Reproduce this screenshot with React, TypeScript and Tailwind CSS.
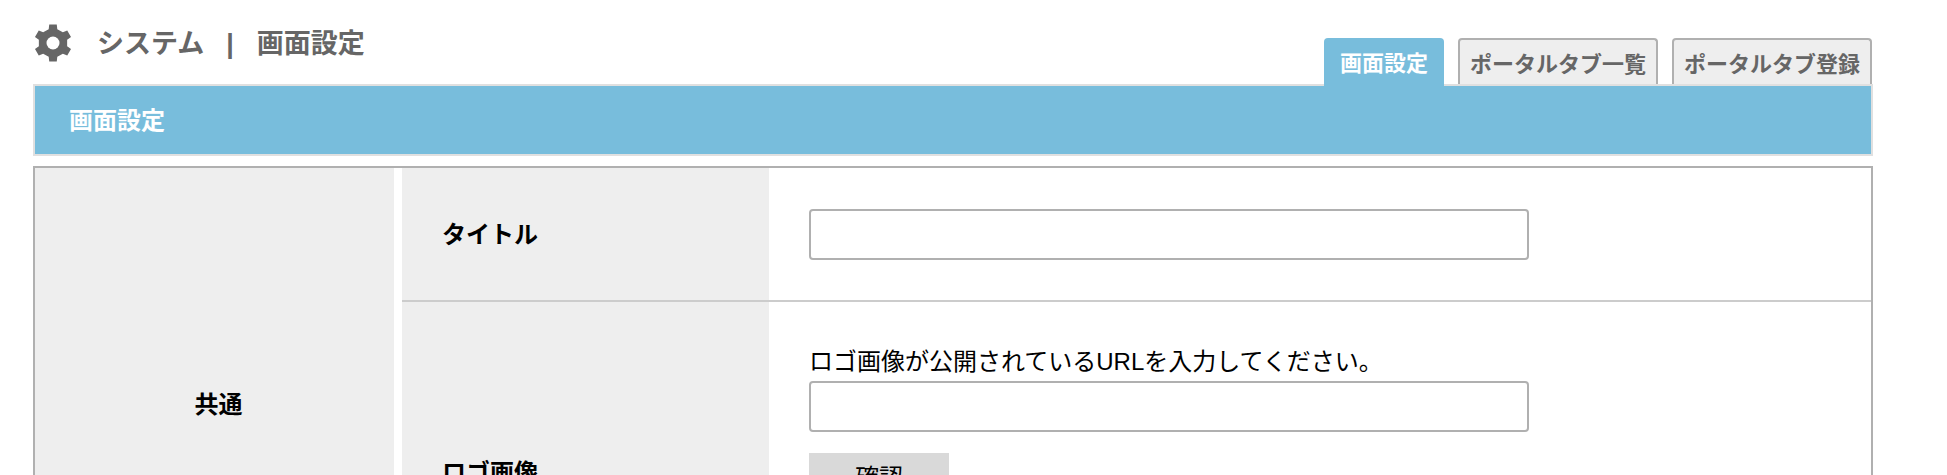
const font = { fontFamily: '"Liberation Sans", "Noto Sans CJK JP", sans-serif' };

function gearPath() {
  const cx = 19, cy = 19, outer = 19, body = 14.5;
  const pts: string[] = [];
  for (let i = 0; i < 6; i++) {
    const a = (i * Math.PI) / 3 - Math.PI / 2;
    const at = (r: number, d: number) => {
      const t = a + d;
      return `${(cx + r * Math.cos(t)).toFixed(2)} ${(cy + r * Math.sin(t)).toFixed(2)}`;
    };
    pts.push(at(body, -0.3), at(outer, -0.2), at(outer, 0.2), at(body, 0.3));
  }
  return `M${pts.join("L")}Z`;
}

function Gear() {
  return (
    <svg viewBox="0 0 38 38" className="h-[38px] w-[38px] shrink-0" aria-hidden="true">
      <path d={gearPath()} fill="#666666" />
      <circle cx="19" cy="19" r="6.5" fill="#ffffff" />
    </svg>
  );
}

function Tab({ label, active }: { label: string; active?: boolean }) {
  return active ? (
    <div className="relative z-10 -mb-[2px] flex h-[48px] w-[120px] items-center justify-center rounded-t-[4px] bg-[#78bddc] pt-[2px] text-[22px] font-bold text-white">
      {label}
    </div>
  ) : (
    <div className="flex h-[46px] w-[200px] items-center justify-center rounded-t-[4px] border-2 border-b-0 border-[#b0b0b0] bg-[#eeeeee] pt-[4px] text-[22px] font-bold whitespace-nowrap text-[#666666]">
      {label}
    </div>
  );
}

function TextInput() {
  return <input type="text" className="block h-[51px] w-[720px] rounded-[4px] border-2 border-[#b0b0b0] bg-white" />;
}

export default function App() {
  return (
    <div className="h-[475px] overflow-hidden bg-white pr-[74px] pl-[33px] text-black" style={font}>
      <div className="flex h-[84px] items-end justify-between pr-[1px]">
        <div className="flex h-full items-start pt-[24px] pl-[1px] text-[27px] font-bold text-[#666666]">
          <Gear />
          <span className="mt-[2px] ml-[25px] leading-[36px]">システム</span>
          <span className="mt-[2px] ml-[22px] leading-[36px]">|</span>
          <span className="mt-[2px] ml-[23px] leading-[36px]">画面設定</span>
        </div>
        <div className="flex items-end gap-[14px]">
          <Tab label="画面設定" active />
          <Tab label="ポータルタブ一覧" />
          <Tab label="ポータルタブ登録" />
        </div>
      </div>

      <div className="flex h-[72px] items-center border-2 border-[#e0e0e0] bg-[#78bddc] pt-[2px] pl-[34px] text-[24px] font-bold text-white">
        画面設定
      </div>

      <div className="mt-[10px] flex h-[472px] border-2 border-b-0 border-[#b0b0b0]">
        <div className="flex w-[359px] shrink-0 items-center justify-center bg-[#eeeeee] pt-[4px] pl-[8px] text-[24px] font-bold">共通</div>
        <div className="ml-[8px] flex min-w-0 flex-1 flex-col">
          <div className="flex h-[134px] shrink-0 border-b-2 border-[#cccccc]">
            <div className="flex w-[367px] shrink-0 items-center bg-[#eeeeee] pt-[2px] pl-[40px] text-[24px] font-bold">タイトル</div>
            <div className="flex flex-1 items-center pl-[40px]">
              <TextInput />
            </div>
          </div>
          <div className="flex flex-1">
            <div className="flex w-[367px] shrink-0 items-center bg-[#eeeeee] pt-[6px] pl-[40px] text-[24px] font-bold">ロゴ画像</div>
            <div className="flex-1 pt-[43px] pl-[40px]">
              <p className="text-[24px] leading-[34px]">ロゴ画像が公開されているURLを入力してください。</p>
              <div className="mt-[2px]"><TextInput /></div>
              <button className="mt-[21px] h-[50px] w-[140px] bg-[#d9d9d9] text-[24px]">確認</button>
            </div>
          </div>
        </div>
      </div>
    </div>
  );
}
